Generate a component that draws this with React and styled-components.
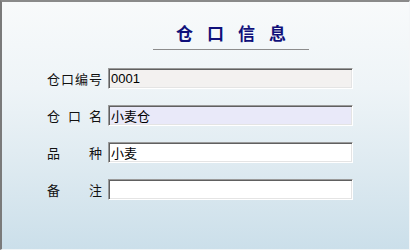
import React from 'react';
import styled, {createGlobalStyle} from 'styled-components';

const GlobalStyle = createGlobalStyle`
    html, body {
        margin: 0;
        padding: 0;
    }
    body {
        font-family: "Liberation Sans", "Noto Sans CJK SC", sans-serif;
    }
`;

const Frame = styled.div`
    box-sizing: border-box;
    width: 410px;
    height: 250px;
    border-top: 2px solid #8a8a8a;
    border-left: 2px solid #7a7a7a;
    border-right: 1px solid #f4f6f8;
    border-bottom: 1px solid #f0f4f6;
    background: linear-gradient(to bottom, #f8fafb 0%, #eef4f7 35%, #dce9f0 70%, #cbdfea 100%);
    padding-top: 19px;
`;

const TitleBox = styled.div`
    width: 156px;
    margin-left: 151px;
    padding-bottom: 5px;
    border-bottom: 1px solid #8c8c8c;
    text-align: center;
`;

const TitleText = styled.span`
    display: inline-block;
    font-family: "Noto Sans CJK SC", sans-serif;
    font-size: 17px;
    line-height: 23px;
    font-weight: 700;
    color: #10107a;
    letter-spacing: 14px;
    padding-left: 14px;
`;

const Form = styled.div`
    display: flex;
    flex-direction: column;
    gap: 16px;
    margin-top: 18px;
    padding-left: 45px;
`;

const Row = styled.div`
    display: flex;
    align-items: center;
    gap: 6px;
`;

const Label = styled.div`
    display: flex;
    justify-content: space-between;
    width: 55px;
    font-family: "Noto Sans CJK SC", sans-serif;
    font-size: 13px;
    line-height: 16px;
    color: #111;
`;

const Field = styled.input`
    box-sizing: border-box;
    width: 245px;
    height: 21px;
    margin: 0;
    padding: 0 2px;
    border-style: solid;
    border-width: 1px;
    border-color: #9a9a9a #ffffff #ffffff #9a9a9a;
    box-shadow: inset 1px 1px 0 #606060, inset -1px -1px 0 #e4e4e4;
    background: ${p => p.$bg};
    font-family: "Liberation Sans", "Noto Sans CJK SC", sans-serif;
    font-size: 13px;
    color: #000;
    outline: none;
`;

const fields = [
    {label: '仓口编号', value: '0001', bg: '#f3f1f0'},
    {label: '仓口名', value: '小麦仓', bg: '#e9e9f9'},
    {label: '品种', value: '小麦', bg: '#ffffff'},
    {label: '备注', value: '', bg: '#ffffff'}
];

export default function App() {
    return (
        <>
            <GlobalStyle/>
            <Frame>
                <TitleBox>
                    <TitleText>仓口信息</TitleText>
                </TitleBox>
                <Form>
                    {fields.map(f =>
                        <Row key={f.label}>
                            <Label>
                                {f.label.split('').map((c, i) => <span key={i}>{c}</span>)}
                            </Label>
                            <Field $bg={f.bg} defaultValue={f.value} readOnly/>
                        </Row>
                    )}
                </Form>
            </Frame>
        </>
    );
}
